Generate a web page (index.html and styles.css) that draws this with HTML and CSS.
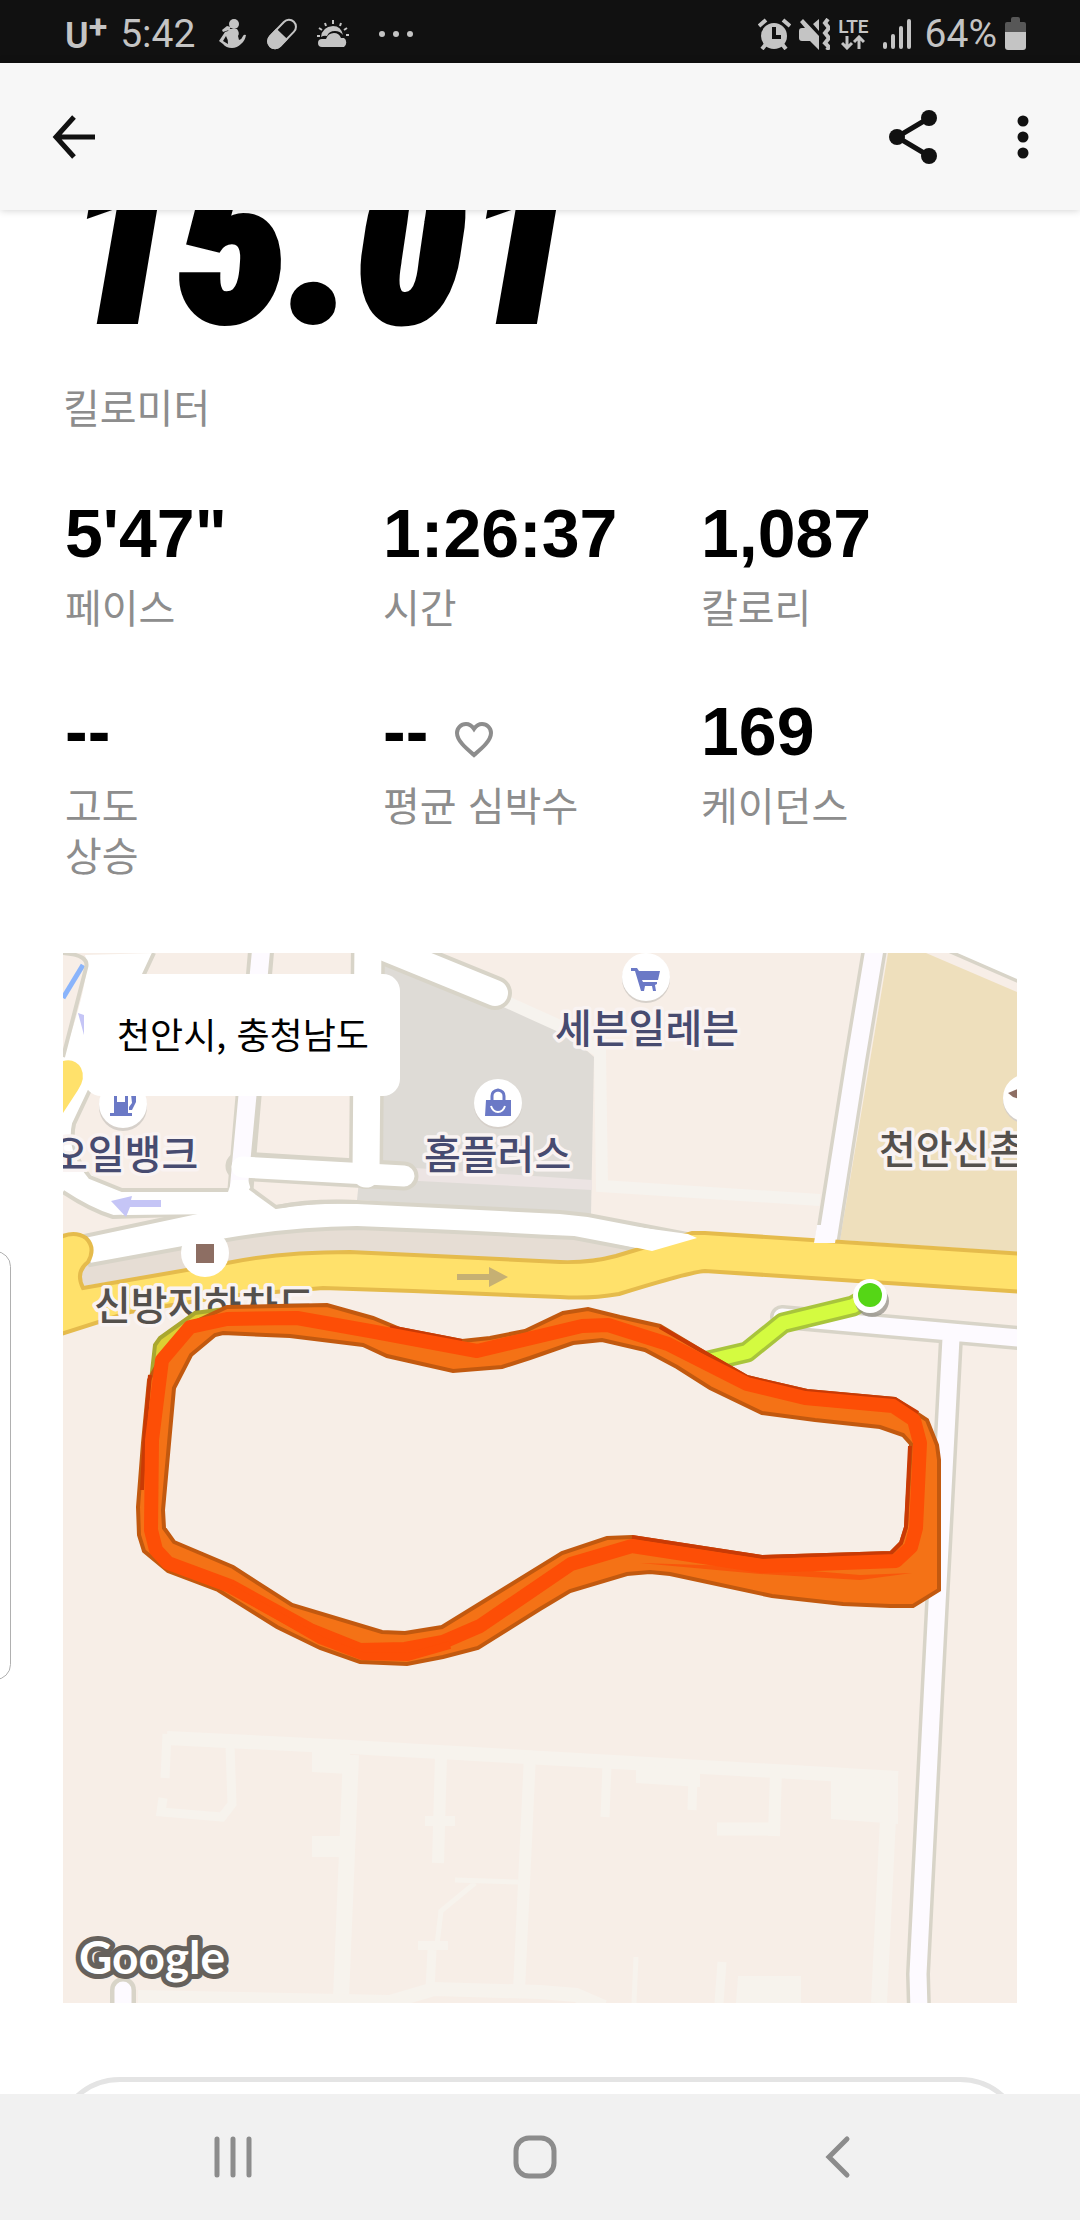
FILE: index.html
```html
<!DOCTYPE html>
<html lang="ko">
<head>
    <meta charset="UTF-8">
    <meta name="viewport" content="width=device-width, initial-scale=1.0">
    <title>러닝 기록</title>
    <link rel="stylesheet" href="styles.css">
</head>
<body>

    <div class="status-bar">
        <div class="status-left">
            <span class="carrier">U<sup>+</sup></span>
            <span class="clock">5:42</span>
            <svg class="icon-person" width="28" height="32" viewBox="0 0 28 32">
                <circle cx="15" cy="6" r="5"/>
                <path d="M3 12l5-4 4 1-2 3-6 2z"/>
                <path d="M10 11h8q3 4 1 7l1 4q3-1 4-4 1-2 3-1-1 6-5 9-4 4-9 4-6 0-9-4l-4-3 6-9 3-1zM7 18l-3 5 5 3q0-5-2-8z"/>
            </svg>
            <svg class="icon-pill" width="32" height="32" viewBox="0 0 32 32">
                <g transform="rotate(-46 16 16)">
                    <rect x="-1" y="9" width="34" height="14" rx="7" fill="none" stroke="#c4c4c4" stroke-width="2"/>
                    <path d="M16 8H6a8 8 0 0 0 0 16h10z"/>
                </g>
            </svg>
            <svg class="icon-weather" width="32" height="30" viewBox="0 0 32 30">
                <path d="M4 18q1-10 12-11 8 0 10 9-3-4-8-4-6 0-8 5-3-1-6 1z"/>
                <path d="M5 28a4 4 0 0 1 0-8h4q2-6 8-6 5 0 7 5h3a4 5 0 0 1 0 9z"/>
                <path d="M16 1v4M8 4l1 3M24 4l-1 3M2 9l3 2M30 9l-3 2M0 17h3M29 16h3" fill="none" stroke="#c4c4c4" stroke-width="2"/>
            </svg>
            <svg class="icon-dots" width="34" height="8" viewBox="0 0 34 8">
                <circle cx="3" cy="4" r="3"/><circle cx="17" cy="4" r="3"/><circle cx="31" cy="4" r="3"/>
            </svg>
        </div>
        <div class="status-right">
            <svg width="33" height="32" viewBox="0 0 33 32">
                <circle cx="16" cy="18" r="13"/>
                <path d="M1 8l7-6M32 8l-7-6M8 26l-4 5M24 26l4 5" fill="none" stroke="#c4c4c4" stroke-width="4"/>
                <path d="M16 9v10h7" fill="none" stroke="#111" stroke-width="4"/>
            </svg>
            <svg width="31" height="32" viewBox="0 0 31 32">
                <path d="M0 13q0-3 3-3h3L1 4l3-3 16 17v14l-9-9H3q-3 0-3-3zM20 1v12l-6-7z"/>
                <path d="M29 1l-3 4 4 5-4 5 4 5-4 5 4 4-2 3" fill="none" stroke="#c4c4c4" stroke-width="4"/>
            </svg>
            <div class="lte">
                <span>LTE</span>
                <svg width="24" height="15" viewBox="0 0 24 15">
                    <path d="M6 1v11M1 8l5 5 5-5M18 14V3M13 7l5-5 5 5" fill="none" stroke="#c4c4c4" stroke-width="3"/>
                </svg>
            </div>
            <svg class="icon-signal" width="28" height="32" viewBox="0 0 28 32">
                <rect x="0" y="24" width="4" height="7" rx="2"/>
                <rect x="8" y="16" width="4" height="15" rx="2"/>
                <rect x="16" y="8" width="4" height="23" rx="2"/>
                <rect x="24" y="1" width="4" height="30" rx="2"/>
            </svg>
            <span class="battery-text">64%</span>
            <svg width="21" height="33" viewBox="0 0 21 33">
                <path d="M0 15V7q0-2 2-2h4V2q0-2 2-2h5q2 0 2 2v3h4q2 0 2 2v8z" fill="#575757"/>
                <path d="M0 15h21v15q0 3-3 3H3q-3 0-3-3z"/>
            </svg>
        </div>
    </div>

    <header class="app-bar">
        <button class="icon-button" aria-label="뒤로">
            <svg width="44" height="44" viewBox="0 0 44 44">
                <path d="M22 2L4 22l18 20M4 22h39" fill="none" stroke="#111" stroke-width="5"/>
            </svg>
        </button>
        <div class="app-actions">
            <button class="icon-button" aria-label="공유">
                <svg width="48" height="54" viewBox="0 0 48 54">
                    <path d="M40 8L8 27l32 19" fill="none" stroke="#111" stroke-width="5"/>
                    <circle cx="40" cy="8" r="8"/><circle cx="8" cy="27" r="8"/><circle cx="40" cy="46" r="8"/>
                </svg>
            </button>
            <button class="icon-button" aria-label="더보기">
                <svg width="12" height="44" viewBox="0 0 12 44">
                    <circle cx="6" cy="6" r="5.5"/><circle cx="6" cy="22" r="5.5"/><circle cx="6" cy="38" r="5.5"/>
                </svg>
            </button>
        </div>
    </header>

    <main>
        <section class="distance">
            <h1>15.01</h1>
            <p class="label">킬로미터</p>
        </section>

        <section class="stats">
            <div class="stat">
                <div class="value">5'47"</div>
                <div class="label">페이스</div>
            </div>
            <div class="stat">
                <div class="value">1:26:37</div>
                <div class="label">시간</div>
            </div>
            <div class="stat">
                <div class="value">1,087</div>
                <div class="label">칼로리</div>
            </div>
            <div class="stat">
                <div class="value">--</div>
                <div class="label">고도<br>상승</div>
            </div>
            <div class="stat">
                <div class="value">--
                    <svg class="heart" width="38" height="36" viewBox="0 0 38 36">
                        <path d="M19 33C12 27 2 19 2 11c0-5 4-9 9-9 4 0 6 2 8 5 2-3 4-5 8-5 5 0 9 4 9 9 0 8-10 16-17 22z"/>
                    </svg>
                </div>
                <div class="label">평균 심박수</div>
            </div>
            <div class="stat">
                <div class="value">169</div>
                <div class="label">케이던스</div>
            </div>
        </section>

        <section class="map">
            <svg class="map-canvas" viewBox="63 953 954 1050">
                <!-- 건물 / 구역 -->
                <path d="M383 953L505 1003 560 1027 594 1057 591 1215 357 1200z" fill="#dedbd6"/>
                <path d="M415 1168L592 1180V1190L400 1180z" fill="#ece4e3"/>
                <path d="M888 953H926L1017 992V1252L840 1240z" fill="#eedfbc"/>
                <path d="M498 998L560 1026 600 1052 602 1186 820 1200" fill="none" stroke="#f6f3ee" stroke-width="12"/>

                <!-- 단지 내 보행로 -->
                <g fill="none" stroke="#f7f3ed">
                    <path d="M167 1738L350 1747 898 1778" stroke-width="14"/>
                    <path d="M167 1734L165 1778M163 1798L161 1812 222 1817 232 1804 230 1745" stroke-width="9"/>
                    <path d="M351 1755L341 1998M888 1775L888 1818 879 2003" stroke-width="16"/>
                    <path d="M441 1755L438 1863M530 1755L519 1990M776 1770L774 1836" stroke-width="12"/>
                    <path d="M455 1880L518 1882M475 1883L441 1911 437 1945M636 1957L634 2003" stroke-width="5"/>
                    <path d="M607 1765L605 1817M432 1950L430 1990M722 1962L719 2003M693 1775L692 1810" stroke-width="9"/>
                    <path d="M138 1997L390 2002 434 1989 540 1992 576 1995 604 2007" stroke-width="14"/>
                    <path d="M717 1829H777" stroke-width="13"/>
                </g>
                <path d="M312 1749h38v25l-38-2zM312 1836h30v21h-30zM425 1816h30v10h-30zM418 1941h30v9h-30zM636 1765l64 4v18l-64-4zM831 1775l67 4v45l-67-5zM738 1976h63v27h-65z" fill="#f7f3ed"/>

                <!-- 왼쪽 위 도로 -->
                <path d="M83 965L63 998" stroke="#8ab4fb" stroke-width="5"/>
                <path d="M85 955L155 953 90 1090 72 1130Q76 1168 95 1177L122 1190H240L280 1207 233 1213 113 1217Q85 1210 63 1192V1057Q92 975 85 955z" fill="#fff"/>
                <path d="M63 953Q90 955 86 968L63 1057M154 953L90 1090 74 1124Q68 1150 90 1177L122 1190H240M63 1192Q90 1210 113 1217L240 1213" fill="none" stroke="#d8d4c8" stroke-width="4"/>
                <path d="M63 1061Q75 1058 81 1068 86 1078 78 1090L63 1113z" fill="#ffe16b"/>
                <path d="M78 1013l6 2v20z" fill="#c5c5f6"/>

                <!-- 중앙분리대 -->
                <path d="M83 1286L80 1266 227 1236 357 1224 560 1236 647 1250 560 1264 327 1254 227 1263z" fill="#e6ddd4"/>

                <!-- 흰 도로 외곽선 -->
                <g fill="none" stroke="#d8d4c8" stroke-linecap="round" stroke-linejoin="round">
                    <path d="M262 940L240 1195" stroke-width="26"/>
                    <path d="M368 940L366 1172" stroke-width="34"/>
                    <path d="M240 1166L404 1176" stroke-width="29"/>
                    <path d="M370 942L495 993" stroke-width="34"/>
                    <path d="M876 940L856 1060 827 1243" stroke-width="25" stroke-linecap="butt"/>
                    <path d="M950 935L1030 970" stroke-width="34"/>
                    <path d="M782 1317L1030 1339" stroke-width="24"/>
                    <path d="M951 1338L933 1680 918 1974 919 2010" stroke-width="24"/>
                    <path d="M123 1990V2020" stroke-width="26"/>
                </g>
                <path d="M75 1238L230 1205 277 1207Q310 1200 357 1202L560 1212 588 1215 692 1235 647 1252 574 1238Q460 1232 357 1228 290 1229 227 1240L90 1265z" fill="#fff" stroke="#d8d4c8" stroke-width="4"/>
                <g fill="none" stroke="#fff" stroke-linecap="round" stroke-linejoin="round">
                    <path d="M262 940L239 1186" stroke="#fdfaff" stroke-width="18"/>
                    <path d="M368 940L366 1174" stroke-width="27"/>
                    <path d="M242 1167L404 1176" stroke-width="21"/>
                    <path d="M370 942L495 993" stroke-width="26"/>
                    <path d="M876 940L856 1060 827 1244" stroke="#fdfaff" stroke-width="18" stroke-linecap="butt"/>
                    <path d="M950 935L1030 970" stroke-width="27"/>
                    <path d="M782 1317L1030 1339M951 1338L933 1680 918 1974 919 2010M123 1990V2020" stroke="#fdfaff" stroke-width="17"/>
                </g>
                <path d="M122 1192H228L232 1180H248L251 1190 276 1208 330 1208 290 1222 232 1214 122 1215z" fill="#fff"/>
                <path d="M250 1188L276 1207Q310 1201 357 1202" fill="none" stroke="#d8d4c8" stroke-width="4"/>
                <path d="M111 1201l21-5-1 4h30v7h-31l-4 10z" fill="#c5c5f6"/>

                <!-- 노란 간선도로 -->
                <path d="M55 1240Q73 1229 86 1238 96 1248 88 1262 75 1272 83 1288L227 1263Q280 1252 350 1252L560 1262Q590 1263 616 1256L692 1233H705L1025 1254V1292L705 1271Q690 1272 619 1294 590 1299 560 1297L413 1291 323 1288 227 1296 130 1312 55 1336z" fill="#ffe16b" stroke="#e5bb4c" stroke-width="4"/>
                <path d="M572 1234L652 1251 697 1238 688 1234 600 1222z" fill="#fff"/>
                <path d="M817 1225L814 1243H835L838 1225z" fill="#fdfaff"/>
                <path d="M457 1274h32v-7l19 10-19 10v-7h-32z" fill="#c6b073"/>

                <!-- 장소 표시 -->
                <g fill="#d6d0ca">
                    <circle cx="123" cy="1107" r="24"/><circle cx="498" cy="1105" r="24"/><circle cx="646" cy="979" r="24"/><circle cx="1027" cy="1100" r="24"/>
                </g>
                <g fill="#fff">
                    <circle cx="123" cy="1104" r="24"/><circle cx="498" cy="1103" r="24"/><circle cx="646" cy="977" r="24"/><circle cx="1027" cy="1098" r="24"/><circle cx="205" cy="1253" r="24"/>
                </g>
                <path d="M196 1244h18v19h-18z" fill="#8d6e63"/>
                <path d="M1008 1093l14-6v13l-9-3z" fill="#8d6e63"/>
                <g fill="#6b79c6">
                    <path d="M114 1092h14v21h4v3h-22v-3h4zM117 1095v7h8v-7z" fill-rule="evenodd"/>
                    <path d="M131 1094h5v8l-4 8h-3v-3l3-4z"/>
                    <path d="M486 1100h25v16h-26z"/>
                    <path d="M492 1102v-6q0-5 6-6 6 1 6 6v6" fill="none" stroke="#6b79c6" stroke-width="3"/>
                    <path d="M631 968h6l2 3h21l-2 9h-16l1 2h14v2l-2 1 1 6h-3l-1-5h-7l-1 5h-3l-6-20h-4z"/>
                </g>
                <path d="M491 1106q2 6 7 6t7-6" fill="none" stroke="#fff" stroke-width="2"/>

                <g class="place">
                    <text x="555" y="1043">세븐일레븐</text>
                    <text x="424" y="1169">홈플러스</text>
                    <text x="51" y="1169">오일뱅크</text>
                </g>
                <g class="place landmark">
                    <text x="879" y="1164">천안신촌</text>
                    <text x="94" y="1320">신방지하차도</text>
                </g>

                <!-- 러닝 경로 -->
                <g fill="none" stroke-linejoin="round">
                    <path d="M868 1297L853 1306 783 1323 747 1352 700 1363" stroke="#a8c43c" stroke-width="21"/>
                    <path d="M868 1297L853 1306 783 1323 747 1352 700 1363" stroke="#d4fb40" stroke-width="14"/>
                </g>
                <path d="M152 1372L155 1345 160 1338 195 1313 225 1309 190 1345z" fill="#dccf34" stroke="#a9a72f" stroke-width="4"/>
                <path fill="#f47216" fill-rule="evenodd" stroke="#c2590f" stroke-width="4" d="M227 1307L327 1305 373 1318 400 1329 462 1341 490 1338 525 1331 563 1313 588 1309 620 1317 660 1326 707 1354 747 1377 807 1391 895 1399 927 1420 937 1445 939 1460 939 1590 913 1606 890 1606 843 1604 798 1599 772 1596 670 1574 650 1572 627 1574 570 1591 540 1609 478 1648 443 1657 407 1664 360 1662 320 1648 277 1627 218 1590 168 1571 144 1551 139 1535 138 1507 143 1443 149 1380 165 1350 195 1322z
                    M223 1333L290 1336 363 1345 387 1356 453 1371 502 1367 530 1358 573 1343 602 1340 645 1350 677 1367 710 1388 762 1413 815 1420 880 1427 903 1435 911 1444 906 1527 901 1543 891 1553 762 1557 632 1537 607 1538 562 1553 442 1627 405 1633 382 1632 292 1605 233 1567 174 1542 164 1528 163 1510 174 1388 191 1355 215 1335z"/>
                <path d="M640 1563L760 1574 860 1580 912 1573 860 1575 765 1567z" fill="#f9560b"/>
                <g fill="none" stroke-linejoin="round">
                    <path d="M660 1327L707 1354 747 1377 807 1391 895 1399 918 1413M910 1446L906 1527 901 1543 891 1553 762 1557 632 1537M390 1327L462 1341M150 1375L145 1430 142 1490" stroke="#c93a05" stroke-width="4"/>
                    <path d="M190 1327L227 1319 297 1318 370 1331 477 1351 582 1326 608 1325 668 1344 747 1384 805 1398 893 1406 914 1420 920 1443 916 1528 911 1547 896 1561 762 1566 632 1546 571 1564 480 1626 443 1642 405 1649 360 1650 310 1630 230 1586 168 1563 156 1550 151 1530 152 1440 162 1360z" stroke="#fd4e06" stroke-width="14"/>
                    <path d="M230 1588L320 1640 362 1656 408 1657 450 1645" stroke="#fd4e06" stroke-width="8"/>
                </g>
                <ellipse cx="872" cy="1301" rx="17" ry="16" fill="#8f8b84" opacity="0.7"/>
                <circle cx="870" cy="1296" r="17" fill="#fff"/>
                <circle cx="870" cy="1295" r="12" fill="#55d616"/>

                <text class="google" x="79" y="1974">Google</text>
            </svg>
            <div class="map-chip">천안시, 충청남도</div>
        </section>

        <button class="pill-button" aria-label="자세히 보기"></button>
    </main>

    <nav class="nav-bar">
        <button class="icon-button" aria-label="최근 앱">
            <svg width="44" height="44" viewBox="0 0 44 44">
                <path d="M6 4v36M22 4v36M38 4v36"/>
            </svg>
        </button>
        <button class="icon-button" aria-label="홈">
            <svg width="44" height="44" viewBox="0 0 44 44">
                <rect x="3" y="3" width="38" height="38" rx="13"/>
            </svg>
        </button>
        <button class="icon-button" aria-label="이전">
            <svg width="44" height="44" viewBox="0 0 44 44">
                <path d="M31 4L13 22l18 18"/>
            </svg>
        </button>
    </nav>

    <div class="edge-handle"></div>

</body>
</html>
```
FILE: styles.css
```css
* {
    box-sizing: border-box;
}
body {
    margin: 0;
    height: 100vh;
    display: flex;
    flex-direction: column;
    position: relative;
    overflow: hidden;
    background-color: #fff;
    font-family: "Liberation Sans", "Noto Sans CJK KR", sans-serif;
    color: #000;
}
svg {
    display: block;
}

/* status bar */
.status-bar {
    flex: none;
    height: 63px;
    padding: 0 54px 0 65px;
    display: flex;
    justify-content: space-between;
    align-items: center;
    background-color: #111;
    color: #c4c4c4;
    font-family: Roboto, sans-serif;
    font-size: 39px;
}
.status-bar svg {
    fill: #c4c4c4;
}
.status-left, .status-right {
    display: flex;
    align-items: center;
    padding-top: 4px;
}
.carrier {
    display: flex;
    align-items: center;
    margin-top: 4px;
    font-size: 36px;
    font-weight: 600;
    line-height: 40px;
}
.carrier sup {
    font-size: 34px;
    font-weight: 700;
    line-height: 32px;
    margin-top: -20px;
}
.clock {
    margin-left: 13px;
}
.icon-person {
    margin-left: 24px;
}
.icon-pill {
    margin-left: 19px;
}
.icon-weather {
    margin-left: 19px;
}
.icon-dots {
    margin-left: 30px;
}
.status-right {
    gap: 8px;
}
.lte {
    display: flex;
    flex-direction: column;
    align-items: center;
    font-size: 19px;
    font-weight: 600;
    line-height: 17px;
}
.icon-signal {
    margin: 0 6px;
}

/* app bar */
.app-bar {
    flex: none;
    height: 147px;
    padding: 0 51px 0 52px;
    display: flex;
    justify-content: space-between;
    align-items: center;
    position: relative;
    z-index: 1;
    background-color: #f7f7f7;
    box-shadow: 0 0 8px rgba(0, 0, 0, 0.2);
}
.app-actions {
    display: flex;
    align-items: center;
    gap: 80px;
}
.app-actions svg {
    fill: #111;
}
.icon-button {
    padding: 0;
    border: none;
    background: none;
    cursor: pointer;
}

/* content */
main {
    flex: 1;
    min-height: 0;
    overflow: hidden;
    padding: 0 63px;
}
.distance h1 {
    margin: 0;
    padding-left: 4px;
    font-family: "Roboto Condensed", Roboto, sans-serif;
    font-size: 224px;
    font-style: italic;
    font-weight: 900;
    line-height: 70px;
    -webkit-text-stroke: 6px #000;
}
.label {
    margin: 0;
    color: #8d8d8d;
    font-family: "Noto Sans CJK KR", sans-serif;
    font-size: 40px;
    line-height: 50px;
}
.distance .label {
    margin-top: 101px;
}
.stats {
    display: grid;
    grid-template-columns: 1fr 1fr 1fr;
    row-gap: 52px;
    margin-top: 54px;
}
.stat {
    padding-left: 2px;
}
.value {
    display: flex;
    align-items: center;
    font-size: 68px;
    font-weight: bold;
    line-height: 96px;
}
.heart {
    margin: 18px 0 0 27px;
    fill: none;
    stroke: #8d8d8d;
    stroke-width: 4px;
}

/* map */
.map {
    position: relative;
    margin-top: 74px;
    background-color: #f7eee7;
}
.map-canvas {
    width: 100%;
    height: auto;
}
.map-chip {
    position: absolute;
    top: 21px;
    left: 21px;
    padding: 34px 31px 38px 33px;
    border-radius: 17px;
    background-color: #fff;
    font-family: "Noto Sans CJK KR", sans-serif;
    font-size: 36px;
    line-height: 50px;
    white-space: nowrap;
}
.place {
    font-family: "Noto Sans CJK KR", sans-serif;
    font-size: 40px;
    font-weight: 500;
    fill: #474b70;
    stroke: #f9f3f2;
    stroke-width: 7px;
    stroke-linejoin: round;
    paint-order: stroke;
}
.landmark {
    fill: #54504c;
}
.google {
    font-family: Lato, sans-serif;
    font-size: 46px;
    font-weight: 700;
    fill: #fff;
    stroke: #66615c;
    stroke-width: 10px;
    stroke-linejoin: round;
    paint-order: stroke;
}

.pill-button {
    display: block;
    width: calc(100% + 18px);
    height: 132px;
    margin: 74px -9px 0;
    border: 5px solid #e4e4e4;
    border-radius: 66px;
    background-color: #fff;
}

/* navigation bar */
.nav-bar {
    flex: none;
    height: 126px;
    padding: 0 91px 0 82px;
    display: flex;
    background-color: #f1f1f1;
}
.nav-bar .icon-button {
    flex: 1;
    display: flex;
    justify-content: center;
    align-items: center;
}
.nav-bar svg {
    fill: none;
    stroke: #8c8c8c;
    stroke-width: 5px;
    stroke-linecap: round;
}

.edge-handle {
    position: absolute;
    top: 1251px;
    left: -20px;
    width: 31px;
    height: 429px;
    border: 1px solid #b0b0b0;
    border-radius: 17px;
    background-color: #fff;
}
```
